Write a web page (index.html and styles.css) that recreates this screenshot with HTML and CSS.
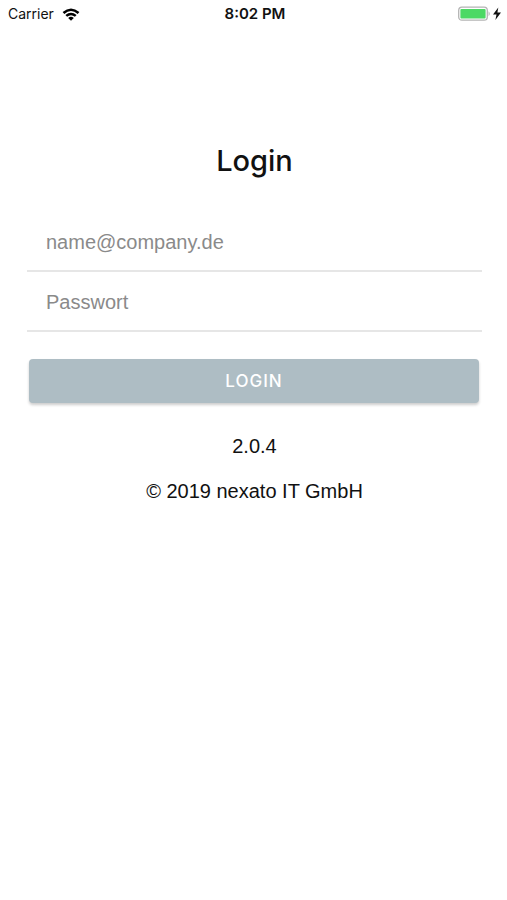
FILE: index.html
```html
<!DOCTYPE html>
<html lang="de">
<head>
<meta charset="utf-8">
<meta name="viewport" content="width=device-width, initial-scale=1">
<title>Login</title>
<link rel="stylesheet" href="styles.css">
</head>
<body>
<header class="status">
  <div class="status-left">
    <span>Carrier</span>
    <svg class="wifi" viewBox="0 0 18 13" aria-hidden="true">
      <path d="M0.6 4.1Q9-3.3 17.4 4.1L15.7 5.9Q9 0.3 2.3 5.9Z"/>
      <path d="M3.4 7.1Q9 2.3 14.6 7.1L12.9 8.8Q9 5.6 5.1 8.8Z"/>
      <path d="M6.2 9.9Q9 7.5 11.8 9.9L9 12.8Z"/>
    </svg>
  </div>
  <span class="time">8:02 PM</span>
  <div class="status-right">
    <svg class="battery" viewBox="0 0 44 16" aria-hidden="true">
      <rect x="0.7" y="1.2" width="28.6" height="13" rx="3.2" fill="#fff" stroke="#b4b4b4" stroke-width="1.3"/>
      <rect x="2.4" y="3" width="25.2" height="9.4" rx="1" fill="#4cd964"/>
      <path d="M30.6 5.2Q32.8 7.7 30.6 10.2Z" fill="#aaa"/>
      <path d="M40.3 1.5L35 8.6H38.5L37.4 14L43 6.6H39.4Z" fill="#111"/>
    </svg>
  </div>
</header>
<main class="page">
  <h1 class="title">Login</h1>
  <form class="form">
    <input class="field" type="email" placeholder="name@company.de" aria-label="E-Mail">
    <input class="field" type="password" placeholder="Passwort" aria-label="Passwort">
    <button class="submit" type="button">LOGIN</button>
  </form>
  <footer class="about">
    <p>2.0.4</p>
    <p>© 2019 nexato IT GmbH</p>
  </footer>
</main>
</body>
</html>
```
FILE: styles.css
```css
* { box-sizing: border-box; }
body {
  margin: 0;
  background: #fff;
  color: #111;
  font-family: "Liberation Sans", Arial, sans-serif;
  font-size: 20px;
  line-height: 24px;
}
.status {
  display: grid;
  grid-template-columns: 1fr auto 1fr;
  align-items: center;
  height: 28px;
  padding: 0 5px 0 8px;
  font-family: Inter, sans-serif;
  font-size: 14px;
}
.status-left { display: flex; align-items: center; gap: 8px; }
.status-right { display: flex; justify-content: flex-end; }
.time { font-size: 15px; font-weight: 600; }
.wifi { width: 18px; height: 13px; }
.battery { width: 44px; height: 16px; }
.page { padding: 0 25px 0 27px; }
.title {
  margin: 114px 0 32px;
  font-family: Inter, sans-serif;
  font-size: 29px;
  font-weight: 500;
  line-height: 38px;
  text-align: center;
}
.form { display: flex; flex-direction: column; }
.field {
  width: 100%;
  height: 60px;
  padding: 2px 19px 0;
  border: 0;
  border-bottom: 2px solid #e6e6e6;
  border-radius: 0;
  background: transparent;
  color: #111;
  font: inherit;
  outline: 0;
}
.field::placeholder { color: #8a8a8a; opacity: 1; }
.submit {
  height: 44px;
  margin: 27px 3px 0 2px;
  padding: 0;
  border: 0;
  border-radius: 4px;
  background: #aebdc4;
  box-shadow: 0 2px 3px rgba(0, 0, 0, 0.2);
  color: #fff;
  font-family: Inter, sans-serif;
  font-size: 17px;
  font-weight: 500;
  letter-spacing: 1px;
}
.about { margin-top: 31px; text-align: center; }
.about p { margin: 0 0 21px; }
```
